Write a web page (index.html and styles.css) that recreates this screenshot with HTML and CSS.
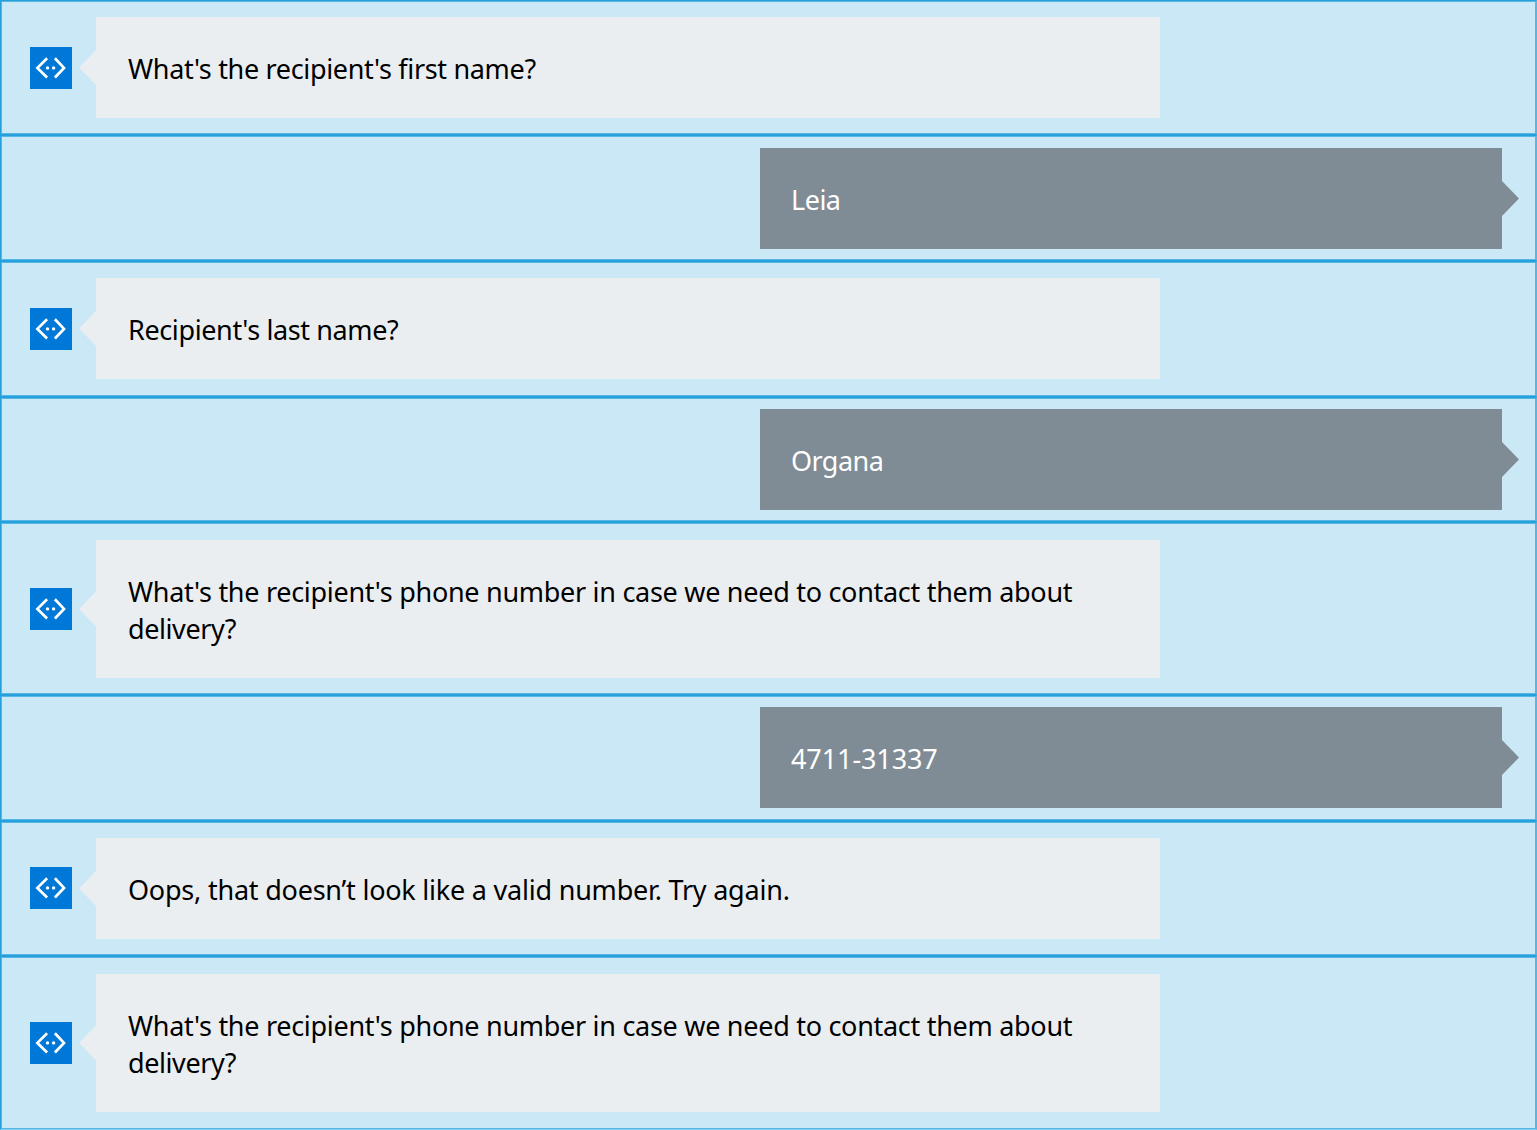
FILE: index.html
```html
<!DOCTYPE html>
<html lang="en">
<head>
<meta charset="utf-8">
<title>Chat</title>
<link rel="stylesheet" href="styles.css">
</head>
<body>
<svg class="defs" width="0" height="0"><symbol id="bot" viewBox="0 0 42 42"><path d="M17.1 11.3 L7.4 20.9 L17.1 30.5 M24.9 11.3 L34 20.9 L24.9 30.5" fill="none" stroke="#fff" stroke-width="2.7"/><circle cx="17.5" cy="20.9" r="1.7" fill="#fff"/><circle cx="23.6" cy="20.9" r="1.7" fill="#fff"/></symbol></svg>
<main class="chat">
<section class="row bot h135"><svg class="avatar"><use href="#bot"/></svg><div class="bubble"><span class="t1">What's the recipient's first name?</span></div></section>
<section class="row user h126"><div class="bubble"><span class="t2">Leia</span></div></section>
<section class="row bot h136"><svg class="avatar"><use href="#bot"/></svg><div class="bubble"><span class="t3">Recipient's last name?</span></div></section>
<section class="row user h125"><div class="bubble"><span class="t4">Organa</span></div></section>
<section class="row bot h173"><svg class="avatar"><use href="#bot"/></svg><div class="bubble"><span class="t5">What's the recipient's phone number in case we need to contact them about</span><br><span class="t6">delivery?</span></div></section>
<section class="row user h126 high"><div class="bubble"><span class="t7">4711-31337</span></div></section>
<section class="row bot h135 raised"><svg class="avatar"><use href="#bot"/></svg><div class="bubble"><span class="t8">Oops, that doesn’t look like a valid number. Try again.</span></div></section>
<section class="row bot h174 last"><svg class="avatar"><use href="#bot"/></svg><div class="bubble"><span class="t5">What's the recipient's phone number in case we need to contact them about</span><br><span class="t6">delivery?</span></div></section>
</main>
</body>
</html>
```
FILE: styles.css
```css
* { box-sizing: border-box; }
body { margin: 0; background: #cbe8f6; font: 27px/37px "Noto Sans", "Open Sans", sans-serif; }
.defs { display: block; }
.chat { width: 1537px; }
.row {
  display: flex;
  align-items: flex-start;
  border: 1px solid #26a0da;
  border-right-color: #56b6e4;
  box-shadow: inset 0 0 0 1px #56b6e4;
}
.last { border-bottom-color: #85cbec; }
.h125 { height: 125px; }
.h126 { height: 126px; }
.h135 { height: 135px; }
.h136 { height: 136px; }
.h173 { height: 173px; }
.h174 { height: 174px; }
.bot { padding: 16px 0 0 29px; }
.user { padding: 12px 34px 0 0; justify-content: flex-end; }
.user.h125, .user.high { padding-top: 11px; }
.bot.h173, .bot.h174 { padding-top: 17px; }
.avatar { width: 42px; height: 42px; margin: 30px 24px 0 0; background: #0078d7; flex: none; }
.raised .avatar { margin-top: 29px; }
.h173 .avatar, .h174 .avatar { margin-top: 48px; }
.bubble { position: relative; width: 1064px; padding: 33px 32px 31px; background: #ebeef1; color: #000; white-space: nowrap; }
.user .bubble { width: 742px; padding-left: 31px; background: #808c95; color: #fff; }
.bubble::before {
  content: "";
  position: absolute;
  top: calc(50% - 17.5px);
  left: -17px;
  width: 17px;
  height: 35px;
  background: inherit;
  clip-path: polygon(100% 0, 0 50%, 100% 100%);
}
.user .bubble::before { left: 100%; clip-path: polygon(0 0, 100% 50%, 0 100%); }
.t1 { letter-spacing: -0.33px; }
.t2 { letter-spacing: -0.5px; }
.t3 { letter-spacing: -0.38px; }
.t4 { letter-spacing: -0.55px; }
.t5 { letter-spacing: -0.29px; }
.t6 { letter-spacing: -0.42px; }
.t7 { letter-spacing: -0.1px; }
.t8 { letter-spacing: -0.22px; }
```
